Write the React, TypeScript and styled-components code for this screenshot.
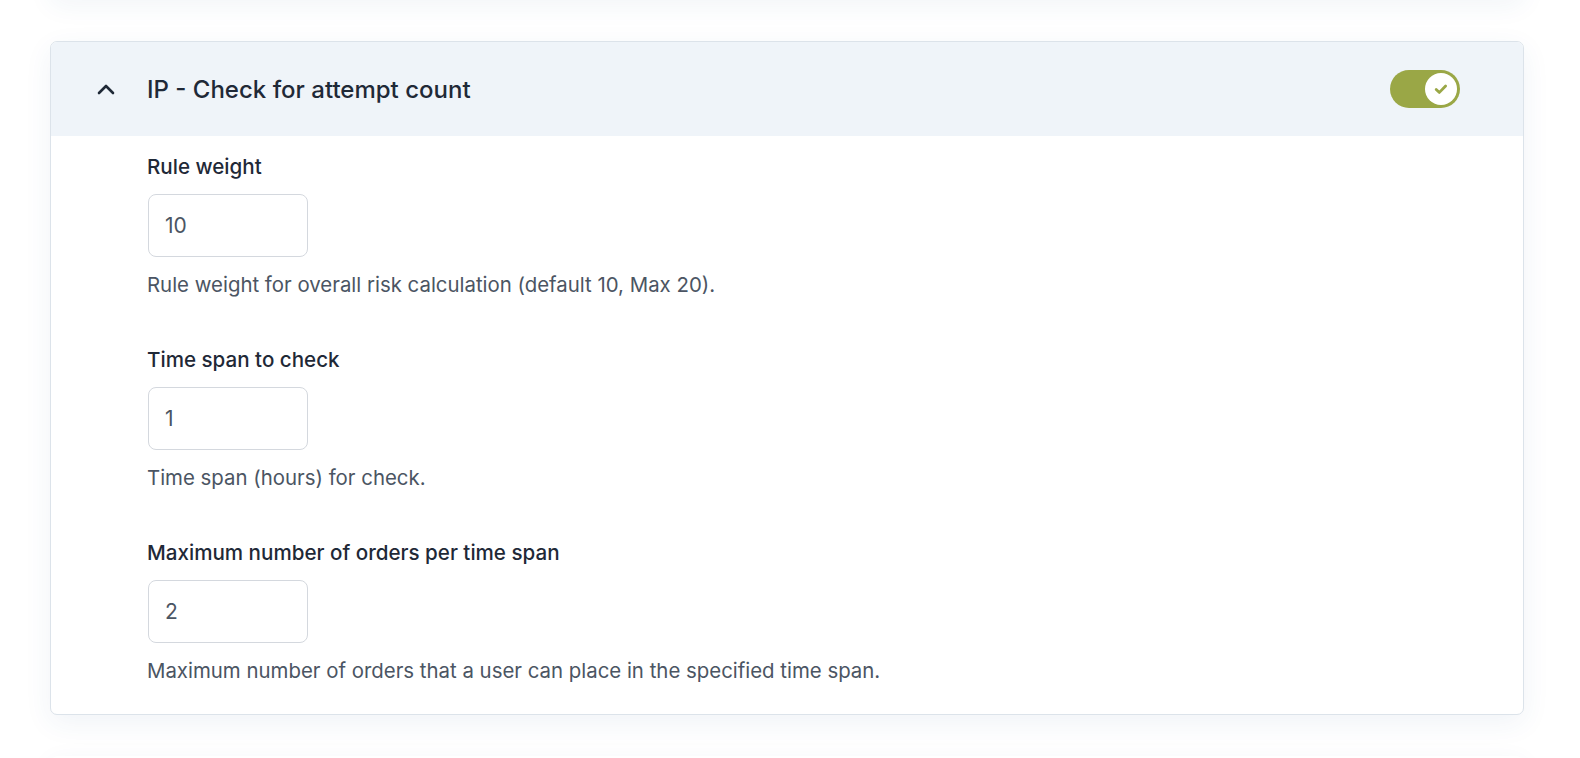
import React from 'react';
import styled, {createGlobalStyle} from "styled-components";

const GlobalStyle = createGlobalStyle`
  html, body {
    margin: 0;
    padding: 0;
    background: #ffffff;
    font-family: Inter, "Noto Sans", sans-serif;
    color: #1f2937;
    overflow: hidden;
  }
`

type Field = {
    label: string;
    value: string;
    help: string;
}

const fields: Field[] = [
    {label: "Rule weight", value: "10", help: "Rule weight for overall risk calculation (default 10, Max 20)."},
    {label: "Time span to check", value: "1", help: "Time span (hours) for check."},
    {label: "Maximum number of orders per time span", value: "2", help: "Maximum number of orders that a user can place in the specified time span."},
]

const ChevronUp = () => (
    <svg width="20" height="14" viewBox="0 0 20 14" fill="none">
        <path d="M3 11 L10 4 L17 11" stroke="#1f2937" strokeWidth="2.6" strokeLinecap="round" strokeLinejoin="round"/>
    </svg>
)

const Check = () => (
    <svg width="18" height="18" viewBox="0 0 18 18" fill="none">
        <path d="M4.2 9.4 L7.4 12.4 L13.6 6" stroke="#9aa746" strokeWidth="2.8" strokeLinecap="round" strokeLinejoin="round"/>
    </svg>
)

export default function App() {
    return (
        <StyledPage>
            <GlobalStyle/>
            <StyledGhostCard $height={40} $marginTop={-40}/>
            <StyledCard>
                <StyledHeader>
                    <StyledChevron><ChevronUp/></StyledChevron>
                    <StyledTitle>IP - Check for attempt count</StyledTitle>
                    <StyledToggle role="switch" aria-checked="true">
                        <StyledKnob><Check/></StyledKnob>
                    </StyledToggle>
                </StyledHeader>
                <StyledBody>
                    {fields.map(f => (
                        <StyledField key={f.label}>
                            <StyledLabel>{f.label}</StyledLabel>
                            <StyledInput defaultValue={f.value}/>
                            <StyledHelp>{f.help}</StyledHelp>
                        </StyledField>
                    ))}
                </StyledBody>
            </StyledCard>
            <StyledGhostCard $height={80} $marginTop={0}/>
        </StyledPage>
    );
}

const StyledPage = styled.div`
  display: flex;
  flex-direction: column;
  gap: 41px;
  box-sizing: border-box;
  width: 1580px;
  height: 758px;
  padding: 0 56px 0 50px;
  overflow: hidden;
`

const StyledGhostCard = styled.div<{ $height: number; $marginTop: number }>`
  flex-shrink: 0;
  height: ${p => p.$height}px;
  margin-top: ${p => p.$marginTop}px;
  background: #ffffff;
  border-radius: 8px;
  box-shadow: 0 6px 26px rgba(40, 80, 140, 0.06);
`

const StyledCard = styled.div`
  flex-shrink: 0;
  background: #ffffff;
  border: 1px solid #dce3ea;
  border-radius: 7px;
  overflow: hidden;
  box-shadow: 0 8px 28px rgba(40, 80, 140, 0.07);
`

const StyledHeader = styled.div`
  display: flex;
  align-items: center;
  height: 94px;
  padding: 0 63px 0 45px;
  background: #eff4f9;
`

const StyledChevron = styled.span`
  display: flex;
  width: 20px;
  margin-right: 31px;
`

const StyledTitle = styled.h2`
  flex: 1;
  margin: 0;
  font-size: 24px;
  font-weight: 500;
  color: #1f2937;
`

const StyledToggle = styled.div`
  display: flex;
  align-items: center;
  justify-content: flex-end;
  box-sizing: border-box;
  width: 70px;
  height: 38px;
  padding: 3px;
  border-radius: 19px;
  background: #9aa746;
`

const StyledKnob = styled.span`
  display: flex;
  align-items: center;
  justify-content: center;
  width: 32px;
  height: 32px;
  border-radius: 50%;
  background: #ffffff;
`

const StyledBody = styled.div`
  display: flex;
  flex-direction: column;
  gap: 49px;
  padding: 18px 40px 30px 96px;
`

const StyledField = styled.div`
  display: flex;
  flex-direction: column;
  align-items: flex-start;
`

const StyledLabel = styled.label`
  font-size: 20.6px;
  font-weight: 500;
  line-height: 26px;
  color: #1f2937;
`

const StyledInput = styled.input`
  box-sizing: border-box;
  width: 160px;
  height: 63px;
  margin: 14px 0 0 1px;
  padding: 0 16px;
  border: 1px solid #d4d8de;
  border-radius: 8px;
  font-family: inherit;
  font-size: 21px;
  color: #4b5563;
  background: #ffffff;
  outline: none;
`

const StyledHelp = styled.p`
  margin: 15px 0 0;
  font-size: 20.4px;
  line-height: 26px;
  color: #4b5563;
`
